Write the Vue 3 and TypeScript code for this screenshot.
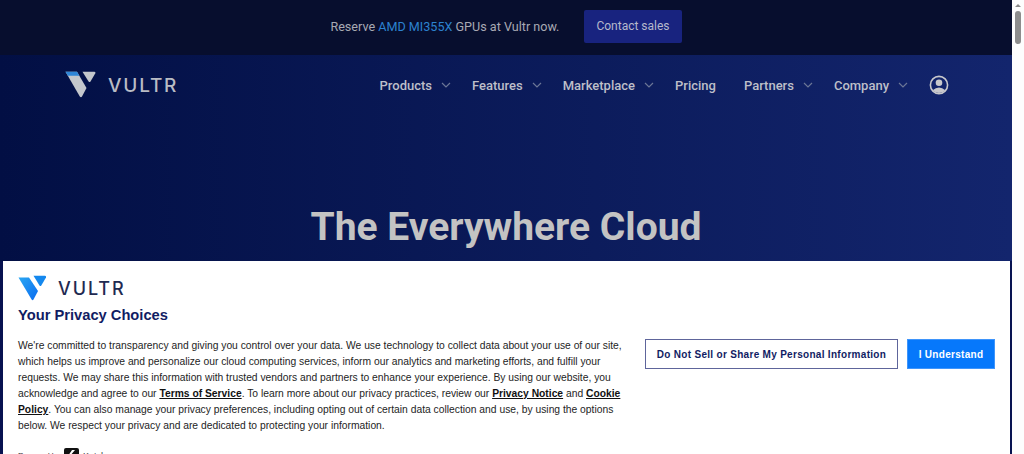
<script setup lang="ts">
const navItems = [
  { label: 'Products', caret: true },
  { label: 'Features', caret: true },
  { label: 'Marketplace', caret: true },
  { label: 'Pricing', caret: false },
  { label: 'Partners', caret: true },
  { label: 'Company', caret: true },
]
</script>

<template>
  <div class="window">
    <div class="page">
      <div class="promo">
        <span class="promo-text">Reserve <span class="promo-accent">AMD MI355X</span> GPUs at Vultr now.</span>
        <span class="promo-btn">Contact sales</span>
      </div>
      <div class="hero">
        <header class="nav">
          <div class="brand">
            <svg width="32" height="28" viewBox="0 0 32 28">
              <path d="M0.5 0.8 H12 L21.5 17 L17 25.5 Q16 27 14.8 25.5 Z" fill="#c4c7cc" />
              <path d="M0.5 0.8 H12 L14.4 4.8 H2.9 Z" fill="#2f86d8" />
              <path d="M17.5 0.8 H29.5 Q31 0.8 30.2 2.5 L25.5 10.4 Q24.5 11.5 23.6 10.4 L17.5 0.8 Z" fill="#c4c7cc" />
            </svg>
            <span class="brand-name">VULTR</span>
          </div>
          <nav class="menu">
            <span v-for="item in navItems" :key="item.label" class="menu-item" :class="{ plain: !item.caret }">
              {{ item.label }}
              <svg v-if="item.caret" class="caret" width="10" height="6" viewBox="0 0 10 6">
                <path d="M1 1 L5 5 L9 1" fill="none" stroke="#6b7696" stroke-width="1.2" />
              </svg>
            </span>
            <svg class="user" width="20" height="20" viewBox="0 0 20 20">
              <circle cx="10" cy="10" r="8.6" fill="none" stroke="#c8c8cc" stroke-width="1.6" />
              <circle cx="10" cy="7.8" r="3.3" fill="#c8c8cc" />
              <path d="M3.6 15.2 Q10 9.6 16.4 15.2 Q10 20.8 3.6 15.2 Z" fill="#c8c8cc" />
            </svg>
          </nav>
        </header>
        <h1 class="title">The Everywhere Cloud</h1>
      </div>

      <section class="consent">
        <div class="consent-logo">
          <svg width="29" height="26" viewBox="0 0 29 26">
            <defs>
              <linearGradient id="vg" x1="0" y1="0" x2="1" y2="1">
                <stop offset="0" stop-color="#2aa6f2" />
                <stop offset="1" stop-color="#0a6cf0" />
              </linearGradient>
            </defs>
            <path d="M0.5 2.5 H11 L20 16 L15.5 24.5 Q14.6 25.8 13.6 24.5 Z" fill="url(#vg)" />
            <path d="M15.5 0.8 H27 Q28.5 0.8 28 2.4 L23.3 10.6 Q22.4 11.6 21.5 10.6 Z" fill="#1488ee" />
          </svg>
          <span class="consent-brand">VULTR</span>
        </div>
        <h2 class="consent-title">Your Privacy Choices</h2>
        <div class="consent-body">
          <p class="consent-text">We're committed to transparency and giving you control over your data. We use technology to collect data about your use of our site, which helps us improve and personalize our cloud computing services, inform our analytics and marketing efforts, and fulfill your requests. We may share this information with trusted vendors and partners to enhance your experience. By using our website, you acknowledge and agree to our <a>Terms of Service</a>. To learn more about our privacy practices, review our <a>Privacy Notice</a> and <a>Cookie Policy</a>. You can also manage your privacy preferences, including opting out of certain data collection and use, by using the options below. We respect your privacy and are dedicated to protecting your information.</p>
          <div class="consent-actions">
            <button class="btn-outline">Do Not Sell or Share My Personal Information</button>
            <button class="btn-solid">I Understand</button>
          </div>
        </div>
        <div class="powered">
          <span class="powered-label">Powered by</span>
          <span class="ketch-mark">
            <svg width="15" height="15" viewBox="0 0 15 15"><path d="M8 2 L11 2 L6 8 L11 13 L8 13 L4 8 Z" fill="#fff" /></svg>
          </span>
          <span class="ketch-name">Ketch</span>
        </div>
      </section>
    </div>
    <div class="scrollbar">
      <svg width="12" height="11" viewBox="0 0 12 11"><path d="M3 7 L6 4 L9 7 Z" fill="#8a8a8a" /></svg>
      <div class="thumb"></div>
    </div>
  </div>
</template>

<style>
html, body { margin: 0; overflow: hidden; background: #fff; }
</style>

<style scoped>
.window {
  display: flex;
  width: 1024px;
  height: 454px;
  overflow: hidden;
  font-family: "Liberation Sans", Arial, sans-serif;
}
.page {
  position: relative;
  width: 1012px;
  height: 454px;
  overflow: hidden;
  flex: none;
  background: #071250;
}
.scrollbar {
  flex: 1;
  background: #fdfdfd;
  display: flex;
  flex-direction: column;
  align-items: center;
}
.thumb {
  width: 6px;
  height: 33px;
  border-radius: 3px;
  background: #8d8d8d;
}
.promo {
  height: 55px;
  box-sizing: border-box;
  padding-bottom: 2px;
  background: #070e2e;
  display: flex;
  align-items: center;
  justify-content: center;
  gap: 25px;
  font-family: Roboto, sans-serif;
  font-size: 12.6px;
}
.promo-text { color: #a7a9b3; }
.promo-accent { color: #2c82cf; }
.promo-btn {
  display: flex;
  align-items: center;
  height: 33px;
  box-sizing: border-box;
  padding: 0 12px 2px;
  background: #18237f;
  border-radius: 2px;
  font-size: 12px;
  color: #b6b9cc;
}
.hero {
  height: 206px;
  background: linear-gradient(90deg, #020f44 0%, #13256d 100%);
  font-family: Roboto, sans-serif;
}
.nav {
  display: flex;
  align-items: center;
  justify-content: space-between;
  height: 60px;
  padding: 0 63px 0 65px;
}
.brand { display: flex; align-items: center; gap: 11px; }
.brand-name {
  font-family: Inter, sans-serif;
  font-size: 19px;
  font-weight: 500;
  letter-spacing: 1.8px;
  color: #b9bcc4;
}
.menu { display: flex; align-items: center; }
.menu-item {
  display: flex;
  align-items: center;
  gap: 9px;
  margin-right: 21px;
  font-size: 13px;
  font-weight: 500;
  color: #bdbfc9;
}
.menu-item.plain { margin-right: 28px; }
.title {
  margin: 88px 0 0;
  text-align: center;
  font-size: 39px;
  line-height: 48px;
  font-weight: 700;
  color: #c3c3c3;
}
.consent {
  position: absolute;
  left: 3px;
  right: 2px;
  top: 261px;
  height: 220px;
  box-sizing: border-box;
  background: #fff;
  padding: 13px 15px 0;
  color: #1b1b1b;
}
.consent-logo { display: flex; align-items: center; gap: 11px; height: 28px; }
.consent-brand {
  font-family: Inter, sans-serif;
  font-size: 18px;
  font-weight: 500;
  letter-spacing: 1.9px;
  color: #1f2a52;
}
.consent-title {
  margin: 3px 0 0;
  font-size: 14.7px;
  line-height: 20px;
  font-weight: 700;
  color: #111c63;
}
.consent-body { display: flex; align-items: flex-start; margin-top: 13px; }
.consent-text {
  margin: 0;
  width: 610px;
  flex: none;
  font-size: 10.3px;
  line-height: 16px;
  color: #242424;
}
.consent-text a {
  font-weight: 700;
  color: #111;
  text-decoration: underline;
}
.consent-actions { display: flex; gap: 9px; margin-left: 17px; margin-top: 1px; }
.consent-actions button {
  height: 30px;
  box-sizing: border-box;
  font-family: "Liberation Sans", Arial, sans-serif;
  font-size: 10px;
  font-weight: 700;
  letter-spacing: 0.3px;
  padding: 0;
  border-radius: 0;
}
.btn-outline {
  width: 253px;
  background: #fff;
  color: #111c63;
  border: 1px solid #5e659b;
}
.btn-solid {
  width: 88px;
  background: #0678fb;
  color: #fff;
  border: 1px solid #3f95fb;
}
.powered {
  display: flex;
  align-items: center;
  margin-top: 14px;
  font-size: 8px;
  color: #333;
}
.powered-label { width: 46px; }
.ketch-mark {
  display: flex;
  width: 15px;
  height: 15px;
  background: #111;
  border-radius: 2px;
  margin-right: 4px;
}
.ketch-name { font-size: 9px; }
</style>
